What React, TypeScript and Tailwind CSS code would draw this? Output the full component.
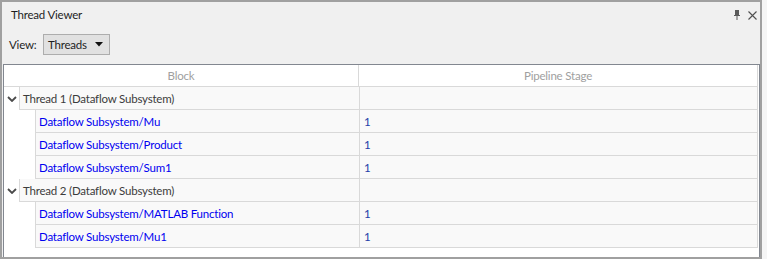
interface Row {
  kind: 'thread' | 'block'
  name: string
  stage?: string
}

const rows: Row[] = [
  { kind: 'thread', name: 'Thread 1 (Dataflow Subsystem)' },
  { kind: 'block', name: 'Dataflow Subsystem/Mu', stage: '1' },
  { kind: 'block', name: 'Dataflow Subsystem/Product', stage: '1' },
  { kind: 'block', name: 'Dataflow Subsystem/Sum1', stage: '1' },
  { kind: 'thread', name: 'Thread 2 (Dataflow Subsystem)' },
  { kind: 'block', name: 'Dataflow Subsystem/MATLAB Function', stage: '1' },
  { kind: 'block', name: 'Dataflow Subsystem/Mu1', stage: '1' },
]

function Chevron() {
  return (
    <svg width="10" height="6" viewBox="0 0 10 6" className="block">
      <path d="M1 1 L5 5 L9 1" fill="none" stroke="#4a4a4a" strokeWidth="1.8" />
    </svg>
  )
}

function Pin() {
  return (
    <svg width="6" height="10" viewBox="0 0 6 10" className="block">
      <rect x="1" y="0" width="4" height="6" fill="#5a5a5a" />
      <rect x="0" y="5" width="6" height="1" fill="#5a5a5a" />
      <rect x="2.5" y="6" width="1" height="4" fill="#5a5a5a" />
    </svg>
  )
}

function Close() {
  return (
    <svg width="9" height="9" viewBox="0 0 9 9" className="block">
      <path d="M0.5 0.5 L8.5 8.5 M8.5 0.5 L0.5 8.5" stroke="#505050" strokeWidth="1.1" />
    </svg>
  )
}

function TreeRow({ row }: { row: Row }) {
  const isThread = row.kind === 'thread'
  return (
    <div className="flex h-[23px]">
      <div
        className={`${isThread ? 'w-[15px]' : 'w-[31px]'} shrink-0 bg-white flex items-center justify-center pl-[1px]`}
      >
        {isThread && <Chevron />}
      </div>
      <div className="flex flex-1 bg-[#f9f9f9] border-l border-b border-r border-[#d9d9d9]">
        <div
          className={`${isThread ? 'w-[340px] text-[#3c3c3c]' : 'w-[324px] text-[#0000f0]'} shrink-0 border-r border-[#d9d9d9] flex items-center pl-[3px] pt-[1px]`}
        >
          {row.name}
        </div>
        <div className="flex-1 flex items-center pl-[4px] pt-[1px] text-[#1f3fa8]">{row.stage}</div>
      </div>
    </div>
  )
}

export default function App() {
  return (
    <div
      className="w-[767px] h-[259px] bg-[#f5f5f5] overflow-hidden text-[11.5px] tracking-[-0.2px] leading-none"
      style={{ fontFamily: 'Lato, "Noto Sans", sans-serif' }}
    >
      <div className="w-[762px] h-[259px] border-2 border-[#a0a0a0] bg-[#f0f0f0] flex flex-col overflow-hidden">
        {/* Title bar */}
        <div className="h-[26px] shrink-0 flex items-center justify-between pl-[9px] pr-[3px] text-[#1e1e1e]">
          <span>Thread Viewer</span>
          <div className="flex items-center gap-[8px]">
            <Pin />
            <Close />
          </div>
        </div>

        {/* View selector */}
        <div className="h-[21px] mt-[6px] shrink-0 flex items-center pl-[7px]">
          <span className="text-[#1e1e1e] w-[34px]">View:</span>
          <div className="h-[21px] w-[67px] border border-[#adadad] bg-[#e1e1e1] flex items-center justify-between pl-[4px] pr-[6px]">
            <span className="text-[#1e1e1e]">Threads</span>
            <svg width="8" height="5" viewBox="0 0 8 5" className="block">
              <path d="M0 0 H8 L4 4.5 Z" fill="#111" />
            </svg>
          </div>
        </div>

        {/* Tree table */}
        <div className="mt-[9px] ml-[1px] mr-0 flex-1 border-t border-l border-r border-[#828790] bg-white pr-[1px] flex flex-col">
          <div className="h-[22px] shrink-0 flex border-b border-[#d9d9d9] text-[#a0a0a0]">
            <div className="w-[355px] shrink-0 border-r border-[#d9d9d9] flex items-center justify-center pt-[1px]">
              Block
            </div>
            <div className="flex-1 flex items-center justify-center border-r border-[#d9d9d9] pt-[1px]">
              Pipeline Stage
            </div>
          </div>
          {rows.map((r, i) => (
            <TreeRow key={i} row={r} />
          ))}
        </div>
      </div>
    </div>
  )
}
